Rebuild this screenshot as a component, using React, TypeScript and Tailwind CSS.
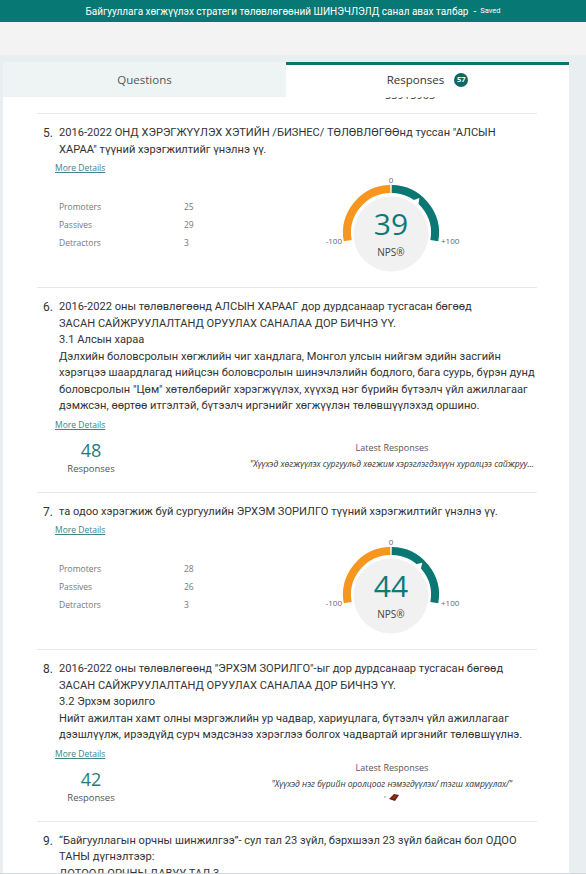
import React from "react";

const FONT = { fontFamily: '"Open Sans", "Noto Sans", sans-serif' };
const TITLE_FONT = { fontFamily: 'Roboto, "Noto Sans", sans-serif' };

type NpsData = { promoters: number; passives: number; detractors: number; score: number };

function Gauge({ score }: { score: number }) {
  const cx = 80;
  const cy = 58;
  const r = 44;
  const pt = (deg: number, rad: number) => {
    const a = (deg * Math.PI) / 180;
    return [cx + rad * Math.sin(a), cy - rad * Math.cos(a)];
  };
  const [lx, ly] = pt(-100, r);
  const [rx, ry] = pt(100, r);
  const [ox, oy] = pt(-0.9, r);
  const [tx, ty] = pt(0.9, r);
  const tip = pt(score, 45);
  const b1 = pt(score - 5, 39.5);
  const b2 = pt(score + 5, 39.5);

  return (
    <svg width="160" height="98" viewBox="0 0 160 98" className="shrink-0">
      <circle cx={cx} cy={cy + 1} r="37.5" fill="#f1f1f1" />
      <path d={`M ${lx} ${ly} A ${r} ${r} 0 0 1 ${ox} ${oy}`} fill="none" stroke="#f7961f" strokeWidth="8" />
      <path d={`M ${tx} ${ty} A ${r} ${r} 0 0 1 ${rx} ${ry}`} fill="none" stroke="#0a7773" strokeWidth="8" />
      <polygon points={`${tip[0]},${tip[1]} ${b1[0]},${b1[1]} ${b2[0]},${b2[1]}`} fill="#ffffff" />
      <g style={FONT}>
        <text x="80" y="8" textAnchor="middle" fontSize="8" fill="#666">0</text>
        <text x="31" y="69" textAnchor="end" fontSize="8" fill="#666">-100</text>
        <text x="130" y="69" textAnchor="start" fontSize="8" fill="#666">+100</text>
        <text x="80" y="60" textAnchor="middle" fontSize="30" fill="#0d7a77">{score}</text>
        <text x="80" y="81" textAnchor="middle" fontSize="10" fill="#444">NPS®</text>
      </g>
    </svg>
  );
}

function QuestionTitle({ num, lines }: { num: number; lines: string[] }) {
  return (
    <div className="flex text-[11.1px] leading-[16.5px] text-[#333]" style={TITLE_FONT}>
      <span className="w-4 shrink-0 text-[12px]">{num}.</span>
      <div className="flex flex-col">
        {lines.map((l, i) => (
          <span key={i} className="whitespace-nowrap">{l}</span>
        ))}
      </div>
    </div>
  );
}

function MoreDetails() {
  return (
    <div className="mt-[3px] pl-3 text-[8.5px] leading-[14px] text-[#3f8287] underline">More Details</div>
  );
}

function NpsBlock({ data }: { data: NpsData }) {
  const rows: [string, number][] = [
    ["Promoters", data.promoters],
    ["Passives", data.passives],
    ["Detractors", data.detractors],
  ];
  return (
    <div className="flex">
      <div className="mt-[23px] w-[268px] pl-4">
        {rows.map(([label, value]) => (
          <div key={label} className="flex h-[18px] items-center text-[8.5px] text-[#777]">
            <span className="w-[125px]">{label}</span>
            <span>{value}</span>
          </div>
        ))}
      </div>
      <Gauge score={data.score} />
    </div>
  );
}

function TextBlock({
  count,
  quote,
  rightOffset,
  extra,
}: {
  count: number;
  quote: string;
  rightOffset: string;
  extra?: boolean;
}) {
  return (
    <div className="flex items-start">
      <div className="mt-[7px] flex w-[96px] flex-col items-center">
        <span className="text-[18px] leading-[22px] text-[#1f7d7e]">{count}</span>
        <span className="mt-px text-[9.5px] leading-[14px] text-[#555]">Responses</span>
      </div>
      <div className={`ml-[108px] flex w-[290px] flex-col items-center ${rightOffset}`}>
        <span className="text-[9px] leading-[14px] text-[#555]">Latest Responses</span>
        <span className="mt-[2px] w-[284px] truncate text-center text-[8.5px] italic leading-[14px] text-[#333]">
          {quote}
        </span>
        {extra && (
          <div className="mt-[2px] flex items-center gap-[2px]">
            <span className="h-[2px] w-[2px] rounded-full bg-[#bbb]" />
            <svg width="12" height="9" viewBox="0 0 12 9">
              <path d="M1 6 L6 1 L11 2 L7 8 Z" fill="#6b1c12" />
              <path d="M3 5 L7 2 L9 3 L6 6 Z" fill="#9a2b1a" />
            </svg>
          </div>
        )}
      </div>
    </div>
  );
}

function Section({ children }: { children: React.ReactNode }) {
  return <div className="border-t border-[#e8e8e8] pl-[6px] pt-[11px]">{children}</div>;
}

export default function App() {
  return (
    <div className="flex h-[874px] w-[586px] flex-col overflow-hidden bg-[#e9eff1]" style={FONT}>
      <div
        className="flex h-[22px] shrink-0 items-center justify-center bg-[#077873] text-white"
        style={TITLE_FONT}
      >
        <span className="text-[10px]">Байгууллага хөгжүүлэх стратеги төлөвлөгөөний ШИНЭЧЛЭЛД санал авах талбар</span>
        <span className="ml-[5px] text-[10px]">-</span>
        <span className="ml-[4px] text-[7.5px]">Saved</span>
      </div>
      <div className="h-[33px] shrink-0 bg-[#f3f3f3]" />

      <div className="flex min-h-0 flex-1 pl-[3px] pt-[7px]">
        <div className="flex w-[566px] flex-col overflow-hidden bg-white">
          <div className="flex h-[35px] shrink-0">
            <div className="flex w-[283px] items-center justify-center bg-[#eef3f4] text-[11.5px] text-[#555]">
              Questions
            </div>
            <div className="flex flex-1 items-center justify-center border-t-[3px] border-[#0b7470] pb-[3px] text-[11.5px] text-[#333]">
              <span>Responses</span>
              <span className="ml-[10px] flex h-[14px] w-[14px] items-center justify-center rounded-full bg-[#0e6765] text-[7.5px] font-bold text-white">
                57
              </span>
            </div>
          </div>

          <div className="ml-[34px] w-[500px]">
            <div className="flex h-[5px] items-end overflow-hidden pl-[348px]">
              <span className="shrink-0 text-[11px] leading-[14px] text-[#444]">55915905</span>
            </div>

            <div className="mt-[11px]">
              <Section>
                <QuestionTitle
                  num={5}
                  lines={[
                    "2016-2022 ОНД ХЭРЭГЖҮҮЛЭХ ХЭТИЙН /БИЗНЕС/ ТӨЛӨВЛӨГӨӨнд туссан \"АЛСЫН",
                    "ХАРАА\" түүний хэрэгжилтийг үнэлнэ үү.",
                  ]}
                />
                <MoreDetails />
                <NpsBlock data={{ promoters: 25, passives: 29, detractors: 3, score: 39 }} />
                <div className="h-[14px]" />
              </Section>

              <Section>
                <QuestionTitle
                  num={6}
                  lines={[
                    "2016-2022 оны төлөвлөгөөнд АЛСЫН ХАРААГ дор дурдсанаар тусгасан бөгөөд",
                    "ЗАСАН САЙЖРУУЛАЛТАНД ОРУУЛАХ САНАЛАА ДОР БИЧНЭ ҮҮ.",
                    "3.1 Алсын хараа",
                    "Дэлхийн боловсролын хөгжлийн чиг хандлага, Монгол улсын нийгэм эдийн засгийн",
                    "хэрэгцээ шаардлагад нийцсэн боловсролын шинэчлэлийн бодлого, бага суурь, бүрэн дунд",
                    "боловсролын \"Цөм\" хөтөлбөрийг хэрэгжүүлэх, хүүхэд нэг бүрийн бүтээлч үйл ажиллагааг",
                    "дэмжсэн, өөртөө итгэлтэй, бүтээлч иргэнийг хөгжүүлэн төлөвшүүлэхэд оршино.",
                  ]}
                />
                <MoreDetails />
                <TextBlock
                  count={48}
                  quote={"\"Хүүхэд хөгжүүлэх сургуульд хөгжим хэрэглэгдэхүүн хуралцээ сайжруулах, тоноглох\""}
                  rightOffset="mt-[9px]"
                />
                <div className="h-[16px]" />
              </Section>

              <Section>
                <QuestionTitle
                  num={7}
                  lines={["та одоо хэрэгжиж буй сургуулийн ЭРХЭМ ЗОРИЛГО түүний хэрэгжилтийг үнэлнэ үү."]}
                />
                <MoreDetails />
                <NpsBlock data={{ promoters: 28, passives: 26, detractors: 3, score: 44 }} />
                <div className="h-[14px]" />
              </Section>

              <Section>
                <QuestionTitle
                  num={8}
                  lines={[
                    "2016-2022 оны төлөвлөгөөнд \"ЭРХЭМ ЗОРИЛГО\"-ыг дор дурдсанаар тусгасан бөгөөд",
                    "ЗАСАН САЙЖРУУЛАЛТАНД ОРУУЛАХ САНАЛАА ДОР БИЧНЭ ҮҮ.",
                    "3.2 Эрхэм зорилго",
                    "Нийт ажилтан хамт олны мэргэжлийн ур чадвар, хариуцлага, бүтээлч үйл ажиллагааг",
                    "дээшлүүлж, ирээдүйд сурч мэдсэнээ хэрэглээ болгох чадвартай иргэнийг төлөвшүүлнэ.",
                  ]}
                />
                <MoreDetails />
                <TextBlock
                  count={42}
                  quote={"\"Хүүхэд нэг бүрийн оролцоог нэмэгдүүлэх/ тэгш хамруулах/\""}
                  rightOffset="mt-0"
                  extra
                />
                <div className="h-[16px]" />
              </Section>

              <Section>
                <QuestionTitle
                  num={9}
                  lines={[
                    "\u201cБайгууллагын орчны шинжилгээ\u201d- сул тал 23 зүйл, бэрхшээл 23 зүйл байсан бол ОДОО",
                    "ТАНЫ дүгнэлтээр:",
                    "ДОТООД ОРЧНЫ ДАВУУ ТАЛ 3",
                  ]}
                />
              </Section>
            </div>
          </div>
        </div>
      </div>
      <div className="h-px shrink-0 bg-[#d4d8da]" />
    </div>
  );
}
